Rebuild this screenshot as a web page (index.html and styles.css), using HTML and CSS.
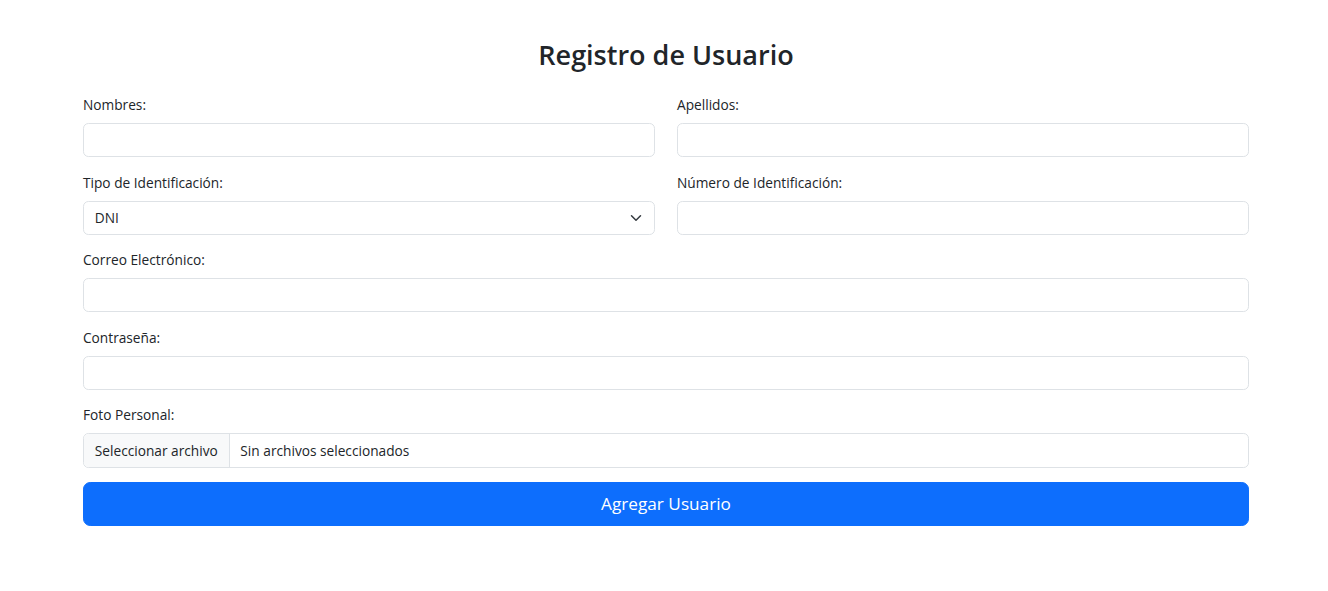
FILE: index.html
```html
<!DOCTYPE html>
<html lang="es">
<head>
<meta charset="utf-8">
<title>Registro de Usuario</title>
<link rel="stylesheet" href="styles.css">
</head>
<body>
<main class="container">
  <h2 class="title">Registro de Usuario</h2>
  <form class="form">
    <div class="row">
      <div class="field">
        <label class="label" for="nombres">Nombres:</label>
        <input class="control" id="nombres" type="text">
      </div>
      <div class="field">
        <label class="label" for="apellidos">Apellidos:</label>
        <input class="control" id="apellidos" type="text">
      </div>
    </div>
    <div class="row">
      <div class="field">
        <label class="label" for="tipo">Tipo de Identificación:</label>
        <div class="select-wrap">
          <select class="control select" id="tipo">
            <option>DNI</option>
          </select>
          <svg class="chevron" viewBox="0 0 16 16" width="12" height="12" aria-hidden="true"><path fill="none" stroke="#343a40" stroke-linecap="round" stroke-linejoin="round" stroke-width="2" d="m2 5 6 6 6-6"/></svg>
        </div>
      </div>
      <div class="field">
        <label class="label" for="numero">Número de Identificación:</label>
        <input class="control" id="numero" type="text">
      </div>
    </div>
    <div class="field">
      <label class="label" for="correo">Correo Electrónico:</label>
      <input class="control" id="correo" type="email">
    </div>
    <div class="field">
      <label class="label" for="clave">Contraseña:</label>
      <input class="control" id="clave" type="password">
    </div>
    <div class="field">
      <span class="label">Foto Personal:</span>
      <div class="control file">
        <span class="file-btn">Seleccionar archivo</span>
        <span class="file-name">Sin archivos seleccionados</span>
      </div>
    </div>
    <button class="submit" type="button">Agregar Usuario</button>
  </form>
</main>
</body>
</html>
```
FILE: styles.css
```css
* { box-sizing: border-box; }
html, body { margin: 0; padding: 0; background: #fff; }
body {
  font-family: "Open Sans", "Noto Sans", "Liberation Sans", sans-serif;
  font-size: 13.7px;
  line-height: 1.5;
  color: #212529;
}
.container {
  width: 1166px;
  margin: 0 0 0 83px;
  padding-top: 38px;
}
.title {
  margin: 0 0 21.6px;
  height: 34.6px;
  font-size: 27px;
  font-weight: 600;
  line-height: 34.6px;
  text-align: center;
}
.form { display: flex; flex-direction: column; }
.row {
  display: grid;
  grid-template-columns: 1fr 1fr;
  column-gap: 22px;
}
.field { margin-bottom: 14.4px; }
.label {
  display: block;
  margin-bottom: 7.2px;
  font-size: 13.7px;
  line-height: 21.6px;
}
.control {
  display: block;
  width: 100%;
  height: 34.4px;
  padding: 5.4px 10.8px;
  font-family: inherit;
  font-size: 13.7px;
  line-height: 21.6px;
  color: #212529;
  background: #fff;
  border: 1px solid #dee2e6;
  border-radius: 5.4px;
  outline: none;
}
.select-wrap { position: relative; }
.select {
  appearance: none;
  -webkit-appearance: none;
  padding-right: 36px;
}
.chevron {
  position: absolute;
  right: 13px;
  top: 50%;
  transform: translateY(-50%);
  pointer-events: none;
}
.file {
  display: flex;
  align-items: stretch;
  padding: 0;
  overflow: hidden;
}
.file-btn {
  display: flex;
  align-items: center;
  padding: 0 10.8px;
  background: #f8f9fa;
  border-right: 1px solid #dee2e6;
}
.file-name {
  display: flex;
  align-items: center;
  padding: 0 10.8px;
}
.submit {
  display: block;
  width: 100%;
  height: 43.6px;
  margin-top: 0;
  font-family: inherit;
  font-size: 17.2px;
  line-height: 1.5;
  color: #fff;
  background: #0d6efd;
  border: 1px solid #0d6efd;
  border-radius: 7.2px;
}
```
